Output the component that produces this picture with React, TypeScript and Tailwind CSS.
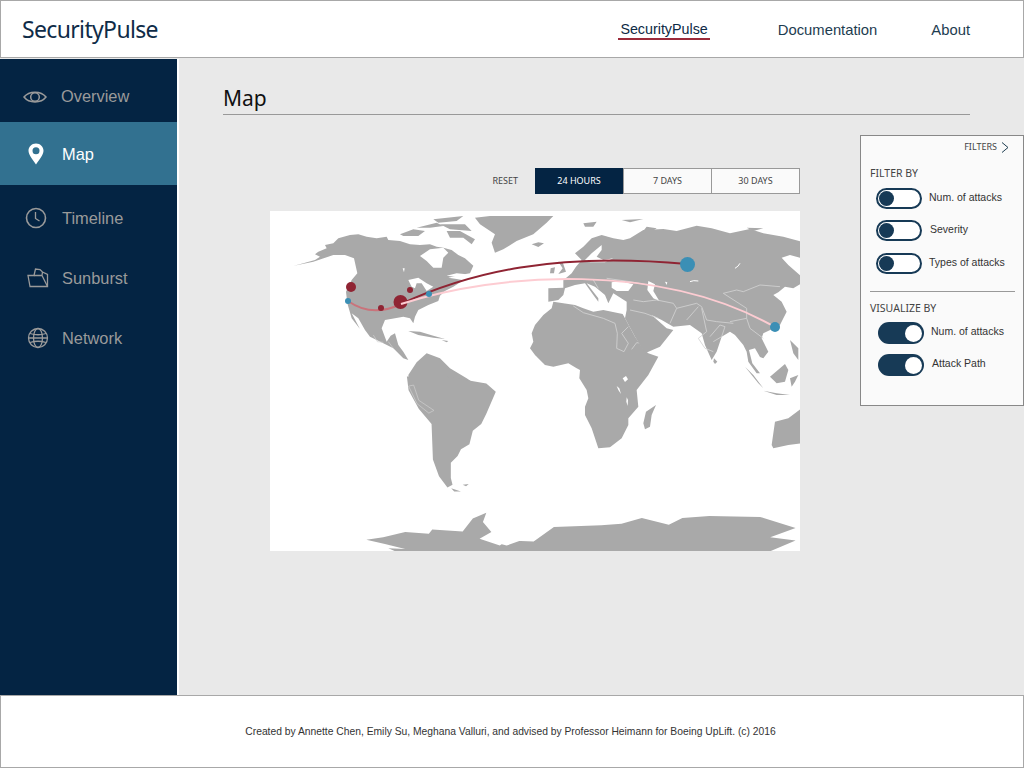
const EyeIcon = () => (
  <svg width="24" height="16" viewBox="0 0 24 16" fill="none" stroke="#9a9a9a" strokeWidth="1.5">
    <path d="M1 8 C6 1.500 18 1.500 23 8 C18 14.500 6 14.500 1 8 Z" />
    <circle cx="12" cy="8" r="4.300" />
  </svg>
);

const PinIcon = () => (
  <svg width="16" height="22" viewBox="0 0 16 22">
    <path
      fillRule="evenodd"
      fill="#fff"
      d="M8 0.500 C3.600 0.500 0.500 3.800 0.500 7.800 C0.500 12 5 17 8 21.500 C11 17 15.500 12 15.500 7.800 C15.500 3.800 12.400 0.500 8 0.500 Z M8 4.300 A3.500 3.500 0 1 1 8 11.300 A3.500 3.500 0 1 1 8 4.300 Z"
    />
  </svg>
);

const ClockIcon = () => (
  <svg width="22" height="22" viewBox="0 0 22 22" fill="none" stroke="#9a9a9a" strokeWidth="1.600">
    <circle cx="11" cy="11" r="9.500" />
    <path d="M10.500 5 V11.500 L14.500 14" strokeWidth="1.300" />
  </svg>
);

const FolderIcon = () => (
  <svg width="22" height="20" viewBox="0 0 22 20" fill="none" stroke="#9a9a9a" strokeWidth="1.300">
    <path d="M3 18.500 L1 7.500 H7 L8.500 1 L13 1.500 L15.500 4 L20.500 6.500 V18.500 Z" />
    <path d="M7 7.500 H15 L15.500 4 M15 7.500 L20.500 18.500" />
  </svg>
);

const GlobeIcon = () => (
  <svg width="22" height="22" viewBox="0 0 22 22" fill="none" stroke="#9a9a9a" strokeWidth="1.300">
    <circle cx="11" cy="11" r="9.500" />
    <ellipse cx="11" cy="11" rx="4.500" ry="9.500" />
    <path d="M3 6.500 Q11 9 19 6.500 M3 15.500 Q11 13 19 15.500 M1.500 11 H20.500" />
  </svg>
);

const Chevron = () => (
  <svg width="8" height="11" viewBox="0 0 8 11" fill="none" stroke="#1d3c50" strokeWidth="1">
    <path d="M1 0.500 L7 5.500 L1 10.500" />
  </svg>
);

const sideItems = [
  { label: "Timeline", icon: <ClockIcon />, iconClass: "w-[22px] ml-[25px] mr-[15px]" },
  { label: "Sunburst", icon: <FolderIcon />, iconClass: "w-[22px] ml-[27px] mr-[13px]" },
  { label: "Network", icon: <GlobeIcon />, iconClass: "w-[22px] ml-[27px] mr-[13px]" },
];

const OffToggle = () => (
  <div className="w-[46px] h-[21px] rounded-full border-2 border-[#173a56] flex items-center pl-[1px] bg-white">
    <div className="w-[15px] h-[15px] rounded-full bg-[#173a56]" />
  </div>
);

const OnToggle = () => (
  <div className="w-[46px] h-[22px] rounded-full bg-[#173a56] flex items-center justify-end pr-[2px]">
    <div className="w-[17px] h-[17px] rounded-full bg-white" />
  </div>
);

const WorldMap = () => (
  <svg viewBox="270 211 530 340" className="block w-[530px] h-[340px] bg-white">
    {/* Americas and arctic canada */}
    <g transform="translate(270 205) scale(0.3333)" fill="#a9a9a9">
      <path d="M72,182 L100,175 135,165 150,155 135,148 145,140 170,130 165,120 190,115 205,100 240,90 265,88 290,95 320,100 350,95 355,105 390,108 420,118 450,120 480,118 500,125 520,128 545,135 565,150 585,160 610,182 600,205 570,210 535,218 560,222 580,226 550,245 525,258 510,272 505,288 475,300 445,315 435,335 430,355 420,340 400,335 375,340 345,345 335,370 350,410 362,392 375,385 385,420 400,440 415,465 400,460 370,430 340,415 300,395 285,375 265,340 245,325 270,372 245,340 232,295 228,260 245,225 262,205 252,160 225,150 190,150 130,170 Z" />
      <path d="M390,88 L430,73 465,78 445,93 400,93 Z M440,68 L500,53 520,63 480,68 Z M490,43 L580,33 560,48 505,53 Z M530,78 L570,78 615,103 605,118 580,98 540,98 Z M510,58 L585,58 605,78 540,73 Z" />
      <path d="M615,38 L660,33 850,33 830,53 790,88 740,108 700,133 675,143 665,113 675,88 630,58 Z" />
      <path d="M415,378 L450,380 490,392 525,402 490,398 445,390 Z M515,405 L535,408 530,412 Z" />
      <path d="M420,540 L415,510 440,472 470,445 510,460 540,490 590,520 620,540 Z" />
      <path d="M450,153 L480,133 520,128 535,143 520,158 515,188 490,188 470,168 Z" fill="#fff" />
      <path d="M415,225 L445,218 470,235 490,245 470,258 455,235 440,235 435,250 425,245 Z M530,212 L560,205 590,208 560,216 Z M398,190 L404,190 402,202 Z" fill="#fff" />
      <path d="M310,390 L322,410 340,412 M355,410 L370,430" fill="none" stroke="#d2d2d2" strokeWidth="2" />
    </g>
    {/* South America below the first crop, Antarctica */}
    <g transform="translate(270 380) scale(0.338)" fill="#a9a9a9">
      <path d="M405,-10 L520,-10 640,10 668,35 640,100 625,130 600,150 590,190 565,205 555,225 535,245 535,290 540,310 525,318 500,285 482,235 478,130 440,85 410,30 Z" />
      <path d="M410,18 L425,15 440,60 485,90 470,98 435,70 Z" fill="none" stroke="#d0d0d0" strokeWidth="2" />
      <path d="M536,320 L565,330 545,330 Z M570,310 L588,308 580,314 Z" />
      <path d="M285,473 L335,465 400,450 470,455 480,442 570,448 600,410 640,393 630,420 655,450 620,470 680,490 700,475 780,478 840,435 980,430 1040,425 1100,408 1180,428 1220,408 1300,402 1450,405 1555,438 1480,465 1555,475 1460,515 390,515 350,498 400,500 340,485 Z" />
      <path d="M625,470 L655,458 750,472 700,490 Z" fill="#fff" />
    </g>
    {/* Africa */}
    <g transform="translate(520 300) scale(0.3333)" fill="#a9a9a9">
      <path d="M100,5 L95,25 70,45 45,75 35,100 40,125 30,145 45,165 75,195 100,200 145,190 170,205 180,210 178,235 200,270 205,295 195,320 195,345 215,385 230,430 235,445 270,442 305,415 325,375 325,355 355,320 350,270 385,225 415,170 385,160 372,150 345,110 315,55 308,42 250,30 220,35 190,25 165,15 130,10 Z" />
      <path d="M408,315 L395,345 390,380 375,388 370,370 378,335 Z" />
      <path d="M308,235 L318,228 324,238 315,246 Z M290,258 L298,265 303,282 295,270 Z M320,292 L324,300 323,318 319,305 Z" fill="#fff" />
      <path d="M160,18 L190,38 250,55 285,70 292,100 290,145 312,155 325,130 305,100 325,80 M335,148 L350,128 385,132 405,128 M345,90 L385,115 395,130" fill="none" stroke="#d2d2d2" strokeWidth="2.500" />
    </g>
    {/* Eurasia */}
    <g transform="translate(530 205) scale(0.3333)" fill="#a9a9a9">
      <path d="M55,250 L100,248 100,226 125,205 138,185 155,165 135,145 160,125 185,100 215,90 250,100 280,105 300,100 340,75 400,72 440,78 500,62 545,70 600,85 660,72 700,85 760,95 815,110 815,160 780,150 755,158 775,180 815,215 815,235 790,250 765,245 745,262 730,270 755,290 770,320 750,360 735,368 700,385 695,400 715,440 700,460 690,456 675,430 657,435 667,475 690,505 680,505 655,470 650,440 640,420 615,390 600,380 575,395 560,440 545,465 525,420 515,385 480,360 430,365 395,345 365,330 410,370 430,375 390,425 345,445 315,395 285,340 290,315 290,290 250,265 235,295 225,270 195,245 170,235 205,280 205,290 190,270 165,235 135,240 105,250 100,270 85,285 55,290 Z" />
      <path d="M185,145 L215,120 215,135 200,155 220,165 250,160 225,172 180,172 165,165 Z" fill="#fff" />
      <path d="M245,232 L270,228 310,238 295,258 260,258 245,248 Z M355,228 L375,238 370,258 388,288 370,280 352,255 Z" fill="#fff" />
      <path d="M85,170 L98,172 108,200 85,207 98,190 Z M62,190 L75,187 72,205 60,205 Z" />
      <path d="M5,118 L25,112 42,115 25,126 Z M160,55 L200,50 190,65 165,65 Z M275,45 L340,42 300,52 Z M330,90 L350,65 380,70 350,90 Z M650,68 L700,70 670,78 Z" />
      <path d="M480,230 Q490,225 505,228 M615,190 Q625,185 630,175" fill="none" stroke="#fff" strokeWidth="3" />
      <path d="M405,230 L412,232 410,240 Z" fill="#fff" />
      <path d="M300,315 L345,325 385,340 M420,355 L440,310 430,295 380,285 340,290 310,285 M440,310 L500,295 515,305 530,345 560,350 610,355 M470,345 L505,305 M515,310 L530,380 505,400 525,430 550,440 M540,395 L570,360 585,365 575,395 550,410 M600,350 L650,340 660,370 700,400 M650,340 L650,310 580,265 620,255 640,260 690,240 750,245 M230,220 L300,230 355,240 M190,225 L205,250" fill="none" stroke="#d2d2d2" strokeWidth="2.500" />
    </g>
    {/* south east asia and australia */}
    <g transform="translate(690 340) scale(0.3333)" fill="#a9a9a9">
      <path d="M72,55 L82,65 75,72 70,65 Z" />
      <path d="M165,80 L190,105 220,145 205,130 Z M220,152 L260,160 300,165 260,165 Z" />
      <path d="M240,110 L285,72 295,90 285,125 260,130 Z M300,115 L325,105 315,125 305,140 Z M300,0 L325,25 325,60 310,40 Z" />
      <path d="M255,245 L295,235 335,205 335,310 295,315 250,325 245,315 Z" />
    </g>
    <path d="M348,301 Q372,318 401,304" fill="none" stroke="#c9737b" strokeWidth="2" />
    <path d="M401,304 C470,272 555,252 687,264" fill="none" stroke="#8f2433" strokeWidth="2" />
    <circle cx="351" cy="287" r="5" fill="#8f2433" />
    <circle cx="410" cy="290" r="3" fill="#8f2433" />
    <circle cx="381" cy="308" r="3" fill="#8f2433" />
    <circle cx="400.500" cy="302" r="7" fill="#8f2433" />
    <path d="M401,304 C500,272 660,262 775,327" fill="none" stroke="#fdccd2" strokeWidth="2" />
    <circle cx="348" cy="301" r="3" fill="#3b8fb5" />
    <circle cx="429" cy="294" r="3" fill="#3b8fb5" />
    <circle cx="687.500" cy="264.500" r="7.500" fill="#3b8fb5" />
    <circle cx="775" cy="327" r="5" fill="#3b8fb5" />
  </svg>
);

const App = () => {
  return (
    <div className="relative w-[1024px] h-[768px] overflow-hidden flex flex-col bg-[#e9e9e9] font-['Liberation_Sans',sans-serif]">
      <header className="h-[58px] shrink-0 bg-white border border-[#a8a8a8] flex items-center pl-[21px] pr-[53px]">
        <span className="font-['Noto_Sans',sans-serif] text-[23px] text-[#0f2c48] tracking-[-0.65px]">SecurityPulse</span>
        <nav className="ml-auto flex items-center text-[14.800px] text-[#1d3c50] pt-[2px]">
          <span className="relative text-[#0d2a45] text-[14.300px] mr-[70px]">
            SecurityPulse
            <span className="absolute left-[-2px] right-[-2px] top-[19px] h-[2px] bg-[#9b2a3a]" />
          </span>
          <span className="mr-[54px]">Documentation</span>
          <span>About</span>
        </nav>
      </header>

      <div className="flex flex-1 min-h-0 pt-[1px]">
        <aside className="w-[177px] shrink-0 bg-[#042443] text-[16.400px] text-[#9a9a9a]">
          <div className="h-[63px] pt-[12px] flex items-center">
            <div className="w-[24px] ml-[23px] mr-[14px] flex"><EyeIcon /></div>
            Overview
          </div>
          <div className="h-[63px] pt-[1px] flex items-center bg-[#327190] text-white mb-[3px]">
            <div className="w-[16px] ml-[28px] mr-[18px] flex"><PinIcon /></div>
            Map
          </div>
          {sideItems.map((item) => (
            <div key={item.label} className="h-[60px] flex items-center">
              <div className={`${item.iconClass} flex`}>{item.icon}</div>
              {item.label}
            </div>
          ))}
        </aside>
        <div className="w-[2px] shrink-0 bg-white" />

        <main className="flex-1 min-w-0 pl-[44px] pr-[54px] pt-[23px]">
          <h1 className="font-['Noto_Sans',sans-serif] text-[21px] leading-[32px] h-[33px] text-[#111] border-b border-[#999]">Map</h1>
          <div className="ml-[47px] w-[530px] mt-[53px]">
            <div className="flex items-center justify-end h-[26px] font-['Noto_Sans',sans-serif] text-[9px] text-[#444]">
              <span className="mr-[17px]">RESET</span>
              <span className="w-[88px] h-full flex items-center justify-center bg-[#042443] text-white">24 HOURS</span>
              <span className="w-[88px] h-full flex items-center justify-center bg-[#fafafa] border border-[#999] border-r-0">7 DAYS</span>
              <span className="w-[89px] h-full flex items-center justify-center bg-[#fafafa] border border-[#999]">30 DAYS</span>
            </div>
            <div className="mt-[17px]">
              <WorldMap />
            </div>
          </div>
        </main>
      </div>

      <footer className="h-[73px] shrink-0 bg-white border border-[#a8a8a8] flex items-center justify-center pr-[3px] text-[10.300px] text-[#333]">
        Created by Annette Chen, Emily Su, Meghana Valluri, and advised by Professor Heimann for Boeing UpLift. (c) 2016
      </footer>

      <section className="absolute left-[860px] top-[135px] w-[164px] h-[271px] bg-[#fafafa] border border-[#888] pl-[9px] pr-[8px] pt-[5px] text-[10.500px] text-[#333]">
        <div className="flex items-center justify-end gap-[4px] pr-[6px] h-[12px] font-['Noto_Sans',sans-serif] text-[9px] text-[#444]">
          FILTERS <Chevron />
        </div>
        <div className="mt-[13px] font-['Noto_Sans',sans-serif] text-[10.500px] leading-[14px] text-[#444]">FILTER BY</div>
        <div className="mt-[8px] ml-[6px] flex items-center gap-[7px] h-[21px]"><OffToggle /><span className="pb-[1px]">Num. of attacks</span></div>
        <div className="mt-[11px] ml-[6px] flex items-center gap-[8px] h-[21px]"><OffToggle /><span className="pb-[1px]">Severity</span></div>
        <div className="mt-[12px] ml-[6px] flex items-center gap-[7px] h-[21px]"><OffToggle /><span className="pb-[1px]">Types of attacks</span></div>
        <div className="mt-[17px] border-t border-[#999]" />
        <div className="mt-[9px] font-['Noto_Sans',sans-serif] text-[10.500px] leading-[14px] text-[#444]">VISUALIZE BY</div>
        <div className="mt-[7px] ml-[8px] flex items-center gap-[7px] h-[22px]"><OnToggle /><span className="pb-[3px]">Num. of attacks</span></div>
        <div className="mt-[10px] ml-[8px] flex items-center gap-[8px] h-[22px]"><OnToggle /><span className="pb-[3px]">Attack Path</span></div>
      </section>
    </div>
  );
};

export default App;
